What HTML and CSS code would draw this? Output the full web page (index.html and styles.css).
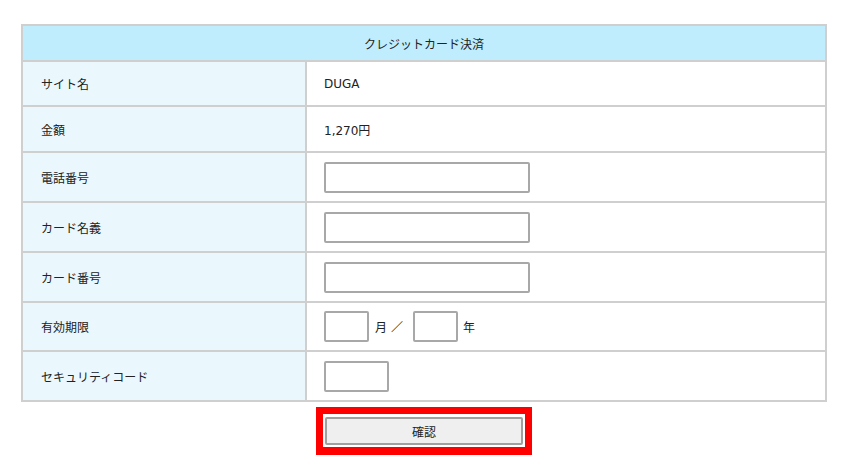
FILE: index.html
```html
<!DOCTYPE html>
<html lang="ja">
<head>
<meta charset="utf-8">
<title>クレジットカード決済</title>
<link rel="stylesheet" href="styles.css">
</head>
<body>
<div class="page">
  <table class="pay">
    <colgroup><col class="c-label"><col></colgroup>
    <thead>
      <tr><th colspan="2" class="head">クレジットカード決済</th></tr>
    </thead>
    <tbody>
      <tr class="r-text"><th>サイト名</th><td>DUGA</td></tr>
      <tr class="r-text r2"><th>金額</th><td>1,270円</td></tr>
      <tr class="r-input"><th>電話番号</th><td><input class="in-wide" type="text"></td></tr>
      <tr class="r-input"><th>カード名義</th><td><input class="in-wide" type="text"></td></tr>
      <tr class="r-input"><th>カード番号</th><td><input class="in-wide" type="text"></td></tr>
      <tr class="r-input r-short"><th>有効期限</th><td><div class="exp"><input class="in-small" type="text"><span class="u-month">月</span><span class="slash">／</span><input class="in-small" type="text"><span class="u-year">年</span></div></td></tr>
      <tr class="r-input"><th>セキュリティコード</th><td><input class="in-code" type="text"></td></tr>
    </tbody>
  </table>
  <div class="actions">
    <div class="highlight"><button class="confirm" type="button">確認</button></div>
  </div>
</div>
</body>
</html>
```
FILE: styles.css
```css
* { box-sizing: border-box; }
html, body { margin: 0; padding: 0; background: #fff; }
body {
  font-family: "DejaVu Sans", "Noto Sans CJK JP", sans-serif;
  font-size: 12px;
  color: #222;
}
.page { padding: 24px 0 0 21px; width: 848px; }
.pay {
  width: 806px;
  table-layout: fixed;
  border-collapse: separate;
  border-spacing: 0;
  border: 1px solid #cfcfcf;
}
.c-label { width: 284px; }
.pay th, .pay td {
  border: 1px solid #cfcfcf;
  padding: 0;
  vertical-align: middle;
  text-align: left;
  font-weight: normal;
}
.pay th.head {
  height: 36px;
  background: #bfedfd;
  text-align: center;
}
.pay tbody th { background: #eaf8fe; padding-left: 18px; }
.pay tbody td { background: #fff; padding-left: 17px; }
.r-text th, .r-text td { height: 45px; }
.r2 th, .r2 td { height: 46px; }
.r-input th, .r-input td { height: 50px; }
.r-short th, .r-short td { height: 49px; }
input {
  font: inherit;
  display: block;
  margin: 0;
  height: 31px;
  border: 2px solid #a8a8a8;
  border-radius: 2px;
  background: #fff;
  padding: 0 4px;
}
.in-wide { width: 206px; }
.in-small { width: 45px; }
.in-code { width: 65px; }
.exp { display: flex; align-items: center; }
.u-month { margin-left: 6px; }
.slash { margin-left: 4px; margin-right: 10px; }
.u-year { margin-left: 5px; }
.actions { width: 806px; display: flex; justify-content: center; padding-top: 5px; }
.highlight {
  border-style: solid;
  border-color: #ff0000;
  border-width: 7px 7px 8px 7px;
  padding: 3px 2px 2px 2px;
  background: #fff;
}
.confirm {
  display: block;
  width: 198px;
  height: 28px;
  font: inherit;
  color: #222;
  background: #efefef;
  border: 2px solid #a0a0a0;
  border-radius: 2px;
  padding: 0;
}
```
